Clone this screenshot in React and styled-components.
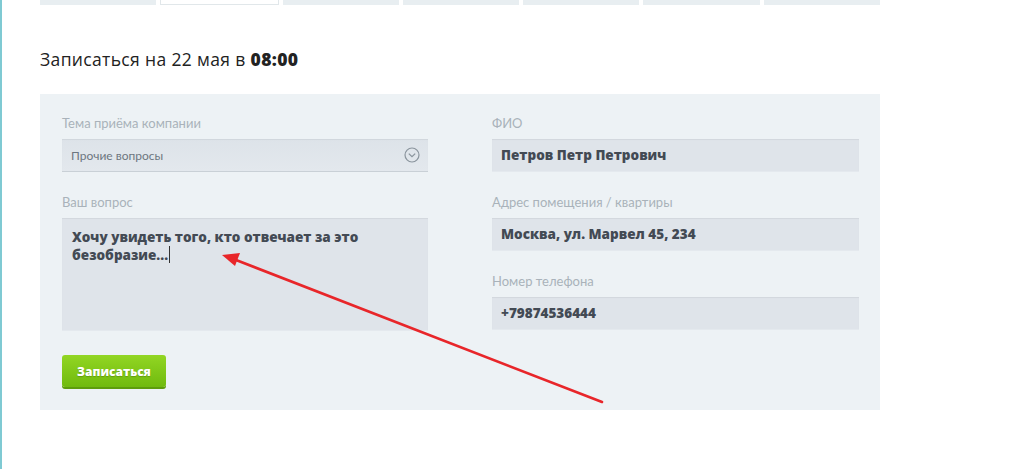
import React from 'react'
import styled, { createGlobalStyle } from 'styled-components'

const GlobalStyle = createGlobalStyle`
  html, body {
    margin: 0;
    padding: 0;
    background: #ffffff;
  }
  body {
    font-family: Lato, "Open Sans", sans-serif;
    color: #222;
  }
`

const Page = styled.div`
  position: relative;
  min-height: 469px;
  border-left: 2px solid #7fcad3;
  padding-left: 38px;
  box-sizing: border-box;
`

const Tabs = styled.div`
  display: flex;
  gap: 4px;
  width: 840px;
  height: 5px;
`

const Tab = styled.div`
  flex: 1;
  background: ${p => (p.active ? '#ffffff' : '#e8eef1')};
  border: ${p => (p.active ? '1px solid #e1e7ea' : 'none')};
  border-top: none;
  box-sizing: border-box;
`

const Title = styled.h2`
  margin: 0;
  padding: 44px 0 25px;
  font-family: "Open Sans", sans-serif;
  font-weight: 400;
  font-size: 17.5px;
  line-height: 20px;
  color: #222;
  letter-spacing: 0.35px;

  b {
    font-weight: 800;
  }
`

const Panel = styled.div`
  width: 840px;
  box-sizing: border-box;
  background: #edf2f5;
  padding: 21px 21px 23px 22px;
`

const Columns = styled.div`
  display: grid;
  grid-template-columns: 366px 367px;
  column-gap: 64px;
`

const Column = styled.div`
  display: flex;
  flex-direction: column;
  gap: 22px;
`

const Field = styled.div`
  display: flex;
  flex-direction: column;
  gap: 8px;
`

const Label = styled.div`
  font-family: Lato, sans-serif;
  font-size: 13px;
  line-height: 16px;
  color: #a9b2ba;
`

const Box = styled.div`
  position: relative;
  height: ${p => p.h || 33}px;
  box-sizing: border-box;
  background: ${p => (p.select ? 'linear-gradient(#dde3e9, #e3e8ed)' : '#dfe4ea')};
  box-shadow: inset 0 1px 1px rgba(0, 0, 0, 0.06);
  border-bottom: ${p => (p.select ? '1px solid #c9d0d6' : '1px solid #e4e9ee')};
  padding: ${p => (p.multi ? '10px 10px' : '0 9px')};
  display: flex;
  align-items: ${p => (p.multi ? 'flex-start' : 'center')};
`

const Value = styled.span`
  font-family: "Open Sans", sans-serif;
  font-weight: 800;
  font-size: 13.5px;
  line-height: 18px;
  color: #434a54;
`

const Placeholder = styled.span`
  font-family: Lato, sans-serif;
  font-size: 12px;
  color: #6d7680;
`

const Chevron = styled.svg`
  position: absolute;
  right: 8px;
  top: 8px;
`

const Caret = styled.span`
  display: inline-block;
  width: 1px;
  height: 17px;
  background: #333;
  vertical-align: -3px;
  margin-left: 1px;
`

const Button = styled.button`
  margin-top: 24px;
  width: 104px;
  height: 32px;
  border: none;
  border-radius: 3px;
  background: linear-gradient(#92d623, #70ba0e);
  box-shadow: 0 2px 0 #5d9c0c;
  color: #fff;
  font-family: "Open Sans", sans-serif;
  font-weight: 800;
  font-size: 12px;
  text-shadow: 0 1px 1px rgba(0, 0, 0, 0.2);
  cursor: pointer;
`

const Arrow = styled.svg`
  position: absolute;
  left: 0;
  top: 0;
  pointer-events: none;
`

export default function App() {
  return (
    <>
      <GlobalStyle />
      <Page>
        <Tabs>
          {[0, 1, 2, 3, 4, 5, 6].map(i => (
            <Tab key={i} active={i === 1} />
          ))}
        </Tabs>
        <Title>
          Записаться на 22 мая в <b>08:00</b>
        </Title>
        <Panel>
          <Columns>
            <Column>
              <Field>
                <Label>Тема приёма компании</Label>
                <Box select>
                  <Placeholder>Прочие вопросы</Placeholder>
                  <Chevron width="16" height="16" viewBox="0 0 16 16">
                    <circle cx="8" cy="8" r="7" fill="none" stroke="#8a949d" strokeWidth="1.2" />
                    <path d="M4.8 6.6 L8 9.6 L11.2 6.6" fill="none" stroke="#8a949d" strokeWidth="1.3" />
                  </Chevron>
                </Box>
              </Field>
              <Field>
                <Label>Ваш вопрос</Label>
                <Box h={113} multi>
                  <Value>
                    Хочу увидеть того, кто отвечает за это
                    <br />
                    безобразие...<Caret />
                  </Value>
                </Box>
              </Field>
            </Column>
            <Column>
              <Field>
                <Label>ФИО</Label>
                <Box>
                  <Value>Петров Петр Петрович</Value>
                </Box>
              </Field>
              <Field>
                <Label>Адрес помещения / квартиры</Label>
                <Box>
                  <Value>Москва, ул. Марвел 45, 234</Value>
                </Box>
              </Field>
              <Field>
                <Label>Номер телефона</Label>
                <Box>
                  <Value>+79874536444</Value>
                </Box>
              </Field>
            </Column>
          </Columns>
          <Button>Записаться</Button>
        </Panel>
        <Arrow width="1024" height="469" viewBox="0 0 1024 469">
          <line x1="600" y1="402" x2="234" y2="260" stroke="#e8262a" strokeWidth="2.6" strokeLinecap="round" />
          <polygon points="220,255 238,253 233,266" fill="#e8262a" />
        </Arrow>
      </Page>
    </>
  )
}
